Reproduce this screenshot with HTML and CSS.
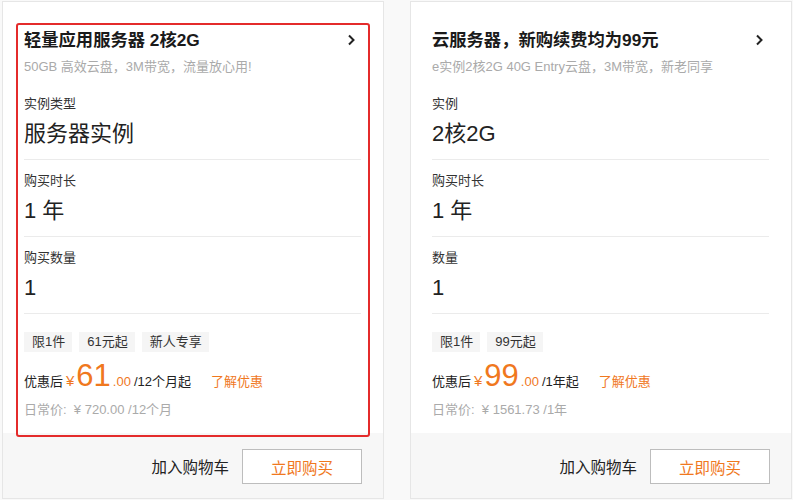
FILE: index.html
```html
<!DOCTYPE html>
<html lang="zh-CN">
<head>
<meta charset="utf-8">
<title>云服务器</title>
<link rel="stylesheet" href="styles.css">
</head>
<body>
<div class="page">
  <div class="card card-highlight">
    <div class="card-body">
      <div class="title-row">
        <h2 class="title">轻量应用服务器 2核2G</h2>
        <svg class="chevron" width="12" height="12" viewBox="0 0 12 12"><path d="M4 1.5 L8.5 6 L4 10.5" fill="none" stroke="#222" stroke-width="2"/></svg>
      </div>
      <p class="subtitle">50GB 高效云盘，3M带宽，流量放心用!</p>
      <div class="section">
        <div class="label">实例类型</div>
        <div class="value">服务器实例</div>
      </div>
      <div class="section">
        <div class="label">购买时长</div>
        <div class="value">1 年</div>
      </div>
      <div class="section">
        <div class="label">购买数量</div>
        <div class="value">1</div>
      </div>
      <div class="tags">
        <span class="tag">限1件</span>
        <span class="tag">61元起</span>
        <span class="tag">新人专享</span>
      </div>
      <div class="price-row">
        <span class="pre">优惠后</span>
        <span class="yen">¥</span>
        <span class="big">61</span>
        <span class="dec">.00</span>
        <span class="unit">/12个月起</span>
        <span class="more">了解优惠</span>
      </div>
      <div class="orig">日常价: &nbsp;¥ 720.00 /12个月</div>
    </div>
    <div class="card-footer">
      <span class="cart">加入购物车</span>
      <button class="buy">立即购买</button>
    </div>
    <div class="highlight-box"></div>
  </div>

  <div class="card">
    <div class="card-body">
      <div class="title-row">
        <h2 class="title">云服务器，新购续费均为99元</h2>
        <svg class="chevron" width="12" height="12" viewBox="0 0 12 12"><path d="M4 1.5 L8.5 6 L4 10.5" fill="none" stroke="#222" stroke-width="2"/></svg>
      </div>
      <p class="subtitle">e实例2核2G 40G Entry云盘，3M带宽，新老同享</p>
      <div class="section">
        <div class="label">实例</div>
        <div class="value">2核2G</div>
      </div>
      <div class="section">
        <div class="label">购买时长</div>
        <div class="value">1 年</div>
      </div>
      <div class="section">
        <div class="label">数量</div>
        <div class="value">1</div>
      </div>
      <div class="tags">
        <span class="tag">限1件</span>
        <span class="tag">99元起</span>
      </div>
      <div class="price-row">
        <span class="pre">优惠后</span>
        <span class="yen">¥</span>
        <span class="big">99</span>
        <span class="dec">.00</span>
        <span class="unit">/1年起</span>
        <span class="more">了解优惠</span>
      </div>
      <div class="orig">日常价: &nbsp;¥ 1561.73 /1年</div>
    </div>
    <div class="card-footer">
      <span class="cart">加入购物车</span>
      <button class="buy">立即购买</button>
    </div>
  </div>
</div>
</body>
</html>
```

FILE: styles.css
```css
* { box-sizing: border-box; }

html, body {
  margin: 0;
  padding: 0;
}

body {
  background: #f9f9f9;
  font-family: "Liberation Sans", "Noto Sans CJK SC", sans-serif;
  color: #222;
  width: 793px;
  height: 500px;
  overflow: hidden;
}

.page {
  display: flex;
  gap: 26px;
  padding: 1px 1px 0 2px;
}

.card {
  position: relative;
  width: 382px;
  height: 498px;
  background: #fff;
  border: 1px solid #e6e6e6;
  display: flex;
  flex-direction: column;
}

.card-body {
  flex: 1;
  padding: 26px 22px 0 21px;
}

.title-row {
  display: flex;
  justify-content: space-between;
  align-items: center;
  height: 24px;
}

.title {
  margin: 0;
  font-size: 17.3px;
  font-weight: bold;
  line-height: 24px;
  color: #1a1a1a;
}

.chevron {
  margin-right: 4px;
}

.subtitle {
  margin: 5px 0 6px;
  font-size: 13px;
  line-height: 20px;
  color: #aaa;
}

.section {
  padding: 11px 0 9px;
  border-bottom: 1px solid #ebebeb;
}

.label {
  font-size: 13px;
  line-height: 20px;
  color: #333;
}

.value {
  margin-top: 4px;
  font-size: 22px;
  line-height: 32px;
  color: #222;
}

.tags {
  display: flex;
  gap: 7px;
  margin-top: 18px;
}

.tag {
  background: #f5f5f5;
  font-size: 13px;
  line-height: 20px;
  height: 20px;
  padding: 0 7px 0 8px;
  color: #333;
}

.price-row {
  display: flex;
  align-items: baseline;
  margin-top: 6px;
  height: 36px;
  font-size: 13px;
  color: #222;
}

.price-row .pre { line-height: 20px; }

.yen {
  color: #f0781e;
  font-size: 15px;
  margin-left: 3px;
}

.big {
  color: #f0781e;
  font-size: 31px;
  line-height: 36px;
  margin-left: 2px;
}

.dec {
  color: #f0781e;
  font-size: 13px;
  margin-left: 2px;
}

.unit {
  margin-left: 3px;
}

.more {
  color: #f0781e;
  margin-left: 20px;
}

.orig {
  margin-top: 6px;
  font-size: 13px;
  line-height: 20px;
  color: #aaa;
}

.card-footer {
  height: 65px;
  background: #f7f7f7;
  display: flex;
  justify-content: flex-end;
  align-items: center;
  padding-right: 21px;
  gap: 13px;
}

.cart {
  font-size: 15.5px;
  color: #222;
}

.buy {
  width: 120px;
  height: 35px;
  border: 1px solid #bdbdbd;
  background: #fff;
  color: #f0781e;
  font-family: "Liberation Sans", "Noto Sans CJK SC", sans-serif;
  font-size: 15.5px;
  padding: 0;
  margin-top: 2px;
}

.highlight-box {
  position: absolute;
  left: 13px;
  top: 21px;
  width: 354px;
  height: 414px;
  border: 2.5px solid #e42b2b;
  border-radius: 3px;
  pointer-events: none;
}
```
